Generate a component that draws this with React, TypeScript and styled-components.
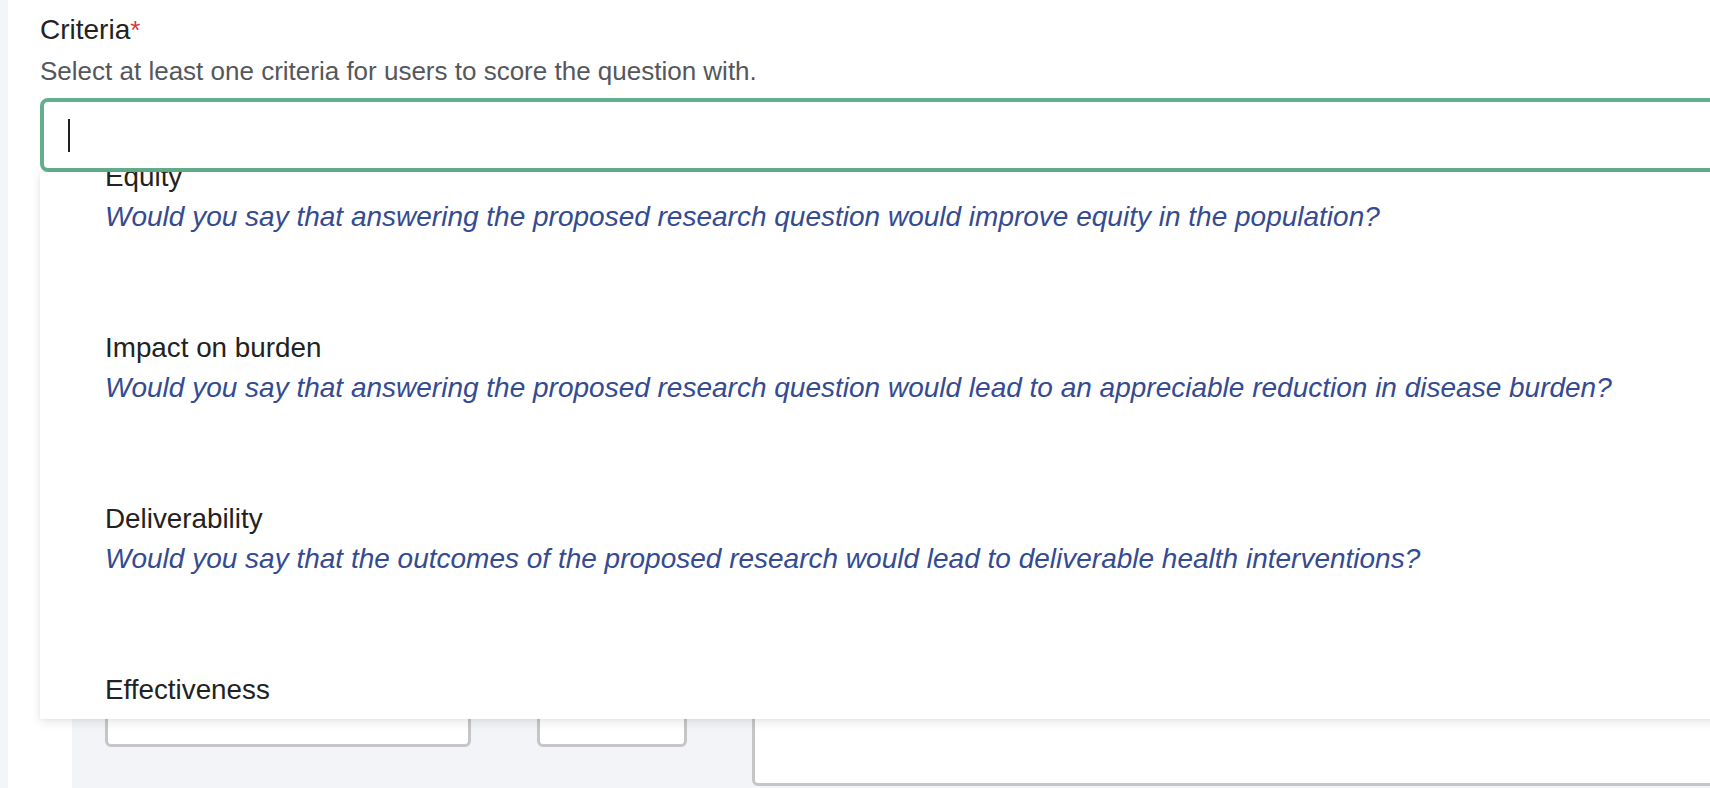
import React from 'react';
import styled, { createGlobalStyle } from 'styled-components';

const GlobalStyle = createGlobalStyle`
  html, body {
    margin: 0;
    padding: 0;
    overflow: hidden;
    background: #ffffff;
    font-family: "Liberation Sans", Arial, Helvetica, sans-serif;
  }
`;

const Page = styled.div`
  display: flex;
  width: 1710px;
  height: 788px;
  overflow: hidden;
`;

const SideEdge = styled.div`
  flex: 0 0 8px;
  background-color: #f4f5f7;
`;

const Main = styled.div`
  flex: 1;
  min-width: 0;
  background-color: #ffffff;
  padding: 10px 0 0 32px;
  overflow: hidden;
`;

const Field = styled.div`
  display: flex;
  flex-direction: column;
  width: 1800px;
`;

const Label = styled.label`
  font-size: 28px;
  line-height: 39px;
  color: #222222;
`;

const Required = styled.span`
  color: #d23b3f;
  font-size: 26px;
`;

const Hint = styled.div`
  margin-top: 2px;
  font-size: 26px;
  line-height: 39px;
  color: #54575c;
`;

const Combo = styled.div`
  position: relative;
  margin-top: 7px;
`;

const ComboInput = styled.div`
  box-sizing: border-box;
  height: 74px;
  border: 4px solid #62af8d;
  border-radius: 8px;
  background: #ffffff;
  display: flex;
  align-items: center;
  padding-left: 24px;
`;

const Caret = styled.span`
  display: block;
  width: 2px;
  height: 33px;
  background-color: #1f1f1f;
`;

const Menu = styled.div`
  position: absolute;
  top: 100%;
  left: 0;
  right: 0;
  height: 547px;
  overflow: hidden;
  background: #ffffff;
  box-shadow: 0 3px 10px rgba(0, 0, 0, 0.1), 0 0 3px rgba(0, 0, 0, 0.05);
  z-index: 10;
`;

const MenuList = styled.ul`
  list-style: none;
  margin: 0;
  padding: 0;
`;

const MenuItem = styled.li`
  padding: 45px 0 46px 65px;
  display: flex;
  flex-direction: column;
`;

const ItemTitle = styled.span`
  font-size: 27.8px;
  line-height: 40px;
  color: #222222;
`;

const ItemText = styled.span`
  font-size: 28px;
  line-height: 40px;
  font-style: italic;
  color: #354b91;
  white-space: nowrap;
`;

const ScoringPanel = styled.div`
  margin: 29px 0 0 32px;
  width: 1800px;
  height: 600px;
  background-color: #f3f4f8;
  padding: 486px 0 0 33px;
  box-sizing: border-box;
`;

const BoxRow = styled.div`
  display: flex;
  align-items: flex-start;
  gap: 65.5px;
`;

const Box = styled.div<{ $width?: number; $height: number }>`
  box-sizing: border-box;
  ${({ $width }) => ($width ? `width: ${$width}px;` : 'flex: 1;')}
  height: ${({ $height }) => $height}px;
  background: #ffffff;
  border: 3px solid #c6c6c6;
  border-radius: 6px;
`;

const criteria = [
  {
    title: 'Equity',
    text: 'Would you say that answering the proposed research question would improve equity in the population?',
  },
  {
    title: 'Impact on burden',
    text: 'Would you say that answering the proposed research question would lead to an appreciable reduction in disease burden?',
  },
  {
    title: 'Deliverability',
    text: 'Would you say that the outcomes of the proposed research would lead to deliverable health interventions?',
  },
  {
    title: 'Effectiveness',
  },
];

const App: React.FC = () => {
  return (
    <>
      <GlobalStyle />
      <Page>
        <SideEdge />
        <Main>
          <Field>
            <Label>
              Criteria<Required>*</Required>
            </Label>
            <Hint>Select at least one criteria for users to score the question with.</Hint>
            <Combo>
              <ComboInput>
                <Caret />
              </ComboInput>
              <Menu>
                {/* list is scrolled a little, so the first title sits under the input */}
                <MenuList style={{ transform: 'translateY(-60px)' }}>
                  {criteria.map((c) => (
                    <MenuItem key={c.title}>
                      <ItemTitle>{c.title}</ItemTitle>
                      {c.text && <ItemText>{c.text}</ItemText>}
                    </MenuItem>
                  ))}
                </MenuList>
              </Menu>
            </Combo>
          </Field>
          <ScoringPanel>
            <BoxRow>
              <Box $width={366} $height={60} />
              <Box $width={150} $height={60} />
              <Box $height={99} />
            </BoxRow>
          </ScoringPanel>
        </Main>
      </Page>
    </>
  );
};

export default App;
